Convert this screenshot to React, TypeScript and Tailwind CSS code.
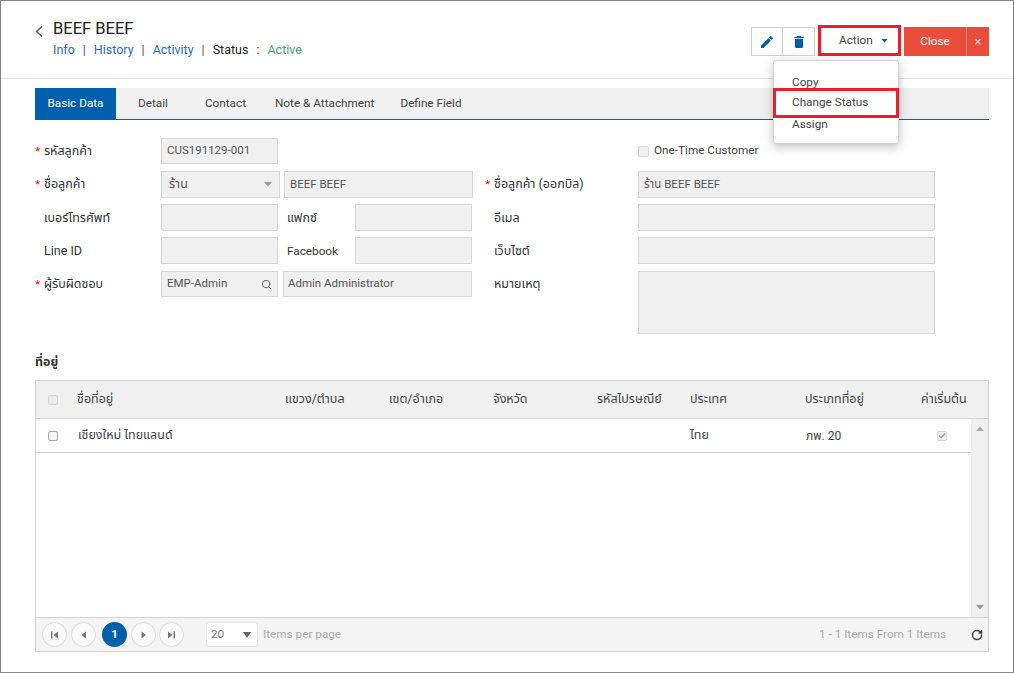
import React from "react";
import { Search, RotateCw, Check } from "lucide-react";

const Box = ({ w, h = "h-[27px]", children, className = "" }: { w: string; h?: string; children?: React.ReactNode; className?: string }) => (
  <div className={`${w} ${h} shrink-0 flex items-center border border-[#d6d6d6] bg-[#f0f0f0] px-[5px] text-[11.5px] text-[#555] ${className}`}>{children}</div>
);

const Label = ({ text, req, w, className = "pt-[2px]" }: { text: string; req?: boolean; w: string; className?: string }) => (
  <div className={`${w} shrink-0 flex items-start h-full text-[#333] ${className}`}>
    <span className="w-[9px] shrink-0 text-[#f00] leading-[22px]">{req ? "*" : ""}</span>
    <span className="leading-[22px] text-[12.5px]">{text}</span>
  </div>
);

const Circle = ({ children, active, className = "" }: { children: React.ReactNode; active?: boolean; className?: string }) => (
  <div className={`w-[25px] h-[25px] rounded-full flex items-center justify-center ${active ? "bg-[#0060ae] text-white font-bold" : "border border-[#dcdcdc] bg-[#fafafa]"} ${className}`}>{children}</div>
);

const Tri = ({ kind }: { kind: "first" | "prev" | "next" | "last" }) => (
  <svg width="9" height="8" viewBox="0 0 9 8" fill="#777">
    {kind === "first" && <><rect x="1" y="0.5" width="1.5" height="7" /><path d="M8 0.5v7L3.5 4z" /></>}
    {kind === "prev" && <path d="M7 0.5v7L2.5 4z" />}
    {kind === "next" && <path d="M2.5 0.5v7L7 4z" />}
    {kind === "last" && <><rect x="6.5" y="0.5" width="1.5" height="7" /><path d="M1 0.5v7L5.5 4z" /></>}
  </svg>
);

const cols = "grid grid-cols-[41px_208px_104px_104px_104px_93px_115px_116px_1fr] items-center";

export default function App() {
  return (
    <div
      className="relative w-[1014px] h-[673px] overflow-hidden border border-[#868686] bg-white text-[11.75px] text-[#333]"
      style={{ fontFamily: 'Roboto, "Noto Sans", "Noto Sans Thai", "DejaVu Sans", sans-serif' }}
    >
      <header className="h-[78px] border-b border-[#e3e3e3] flex justify-between pl-[34px] pr-[24px]">
        <div className="flex pt-[17px]">
          <svg width="18" height="24" viewBox="0 0 18 24" className="mt-[1px] text-[#666]" fill="none" stroke="currentColor" strokeWidth="1.6">
            <path d="M7 7.5 1.5 12.5 7 17.5" />
          </svg>
          <div>
            <div className="text-[16.5px] leading-[22px] text-[#222]">BEEF BEEF</div>
            <div className="flex gap-[8px] mt-[1px] leading-[18px] text-[12.5px] text-[#2a6ebb]">
              <span>Info</span><span className="text-[#555]">|</span>
              <span>History</span><span className="text-[#555]">|</span>
              <span>Activity</span><span className="text-[#a33]">|</span>
              <span className="text-[#222]">Status</span><span className="text-[#222]">:</span>
              <span className="text-[#3aa76d]">Active</span>
            </div>
          </div>
        </div>
        <div className="flex items-start pt-[26px]">
          <div className="w-[32px] h-[29px] border border-[#d0d0d0] flex items-center justify-center">
            <svg width="12" height="12" viewBox="3 3 18 18" fill="#0060ae"><path d="M3 17.25V21h3.75L17.81 9.94l-3.75-3.75L3 17.25zM20.71 7.04a1 1 0 0 0 0-1.41l-2.34-2.34a1 1 0 0 0-1.41 0l-1.83 1.83 3.75 3.75 1.83-1.83z" /></svg>
          </div>
          <div className="w-[32px] h-[29px] border border-l-0 border-[#d0d0d0] flex items-center justify-center">
            <svg width="10" height="12" viewBox="5 3 14 18" fill="#0060ae"><path d="M6 19c0 1.1.9 2 2 2h8c1.1 0 2-.9 2-2V7H6v12zM19 4h-3.5l-1-1h-5l-1 1H5v2h14V4z" /></svg>
          </div>
          <div className="ml-[3px] -mt-[2px] w-[83px] h-[31px] border-[3px] border-[#ed1c2e] flex items-center pl-[18px] text-[#444]">
            <span>Action</span>
            <svg width="7" height="4" viewBox="0 0 8 5" fill="#0060ae" className="ml-[8px]"><path d="M0 0h8L4 4.5z" /></svg>
          </div>
          <div className="ml-[3px] w-[62px] h-[29px] bg-[#eb4d3d] text-white flex items-center justify-center">Close</div>
          <div className="w-[23px] h-[29px] bg-[#eb4d3d] border-l border-[#f08478] text-[#fbd5d0] flex items-center justify-center text-[13px]">×</div>
        </div>
      </header>

      <div className="absolute left-[772px] top-[59px] w-[126px] h-[84px] bg-white border border-[#d2d2d2] rounded-[3px] shadow-[0_3px_10px_rgba(0,0,0,0.25)] pt-[11px] text-[#444] z-10">
        <div className="pl-[18px] leading-[21px]">Copy</div>
        <div className="-mx-px h-[30px] -mt-[5px] -mb-[4px] border-[3px] border-[#ed1c2e] pl-[16px] flex items-center">Change Status</div>
        <div className="pl-[18px] leading-[21px]">Assign</div>
      </div>

      <div className="pl-[34px] pr-[24px] pt-[9px]">
        <nav className="h-[32px] flex bg-[#f0f0f0] border-b border-[#0060ae] text-[#444]">
          <div className="w-[81px] bg-[#0060ae] text-white flex items-center justify-center">Basic Data</div>
          <div className="ml-[22px] flex items-center">Detail</div>
          <div className="ml-[37px] flex items-center">Contact</div>
          <div className="ml-[29px] flex items-center">Note &amp; Attachment</div>
          <div className="ml-[26px] flex items-center">Define Field</div>
        </nav>

        <section className="mt-[18px] flex flex-col">
          <div className="flex h-[26px]">
            <Label w="w-[126px]" text="รหัสลูกค้า" req />
            <Box w="w-[117px]" h="h-[26px]">CUS191129-001</Box>
            <div className="ml-[360px] flex items-center gap-[5px] text-[#444]">
              <div className="w-[11px] h-[11px] rounded-[2px] border border-[#d6d6d6] bg-[#f0f0f0]" />
              <span>One-Time Customer</span>
            </div>
          </div>
          <div className="flex h-[27px] mt-[7px]">
            <Label w="w-[126px]" text="ชื่อลูกค้า" req />
            <Box w="w-[119px]" className="!px-[7px] justify-between">
              <span className="text-[12.5px]">ร้าน</span>
              <svg width="8" height="5" viewBox="0 0 8 5" fill="#999"><path d="M0 0h8L4 4.5z" /></svg>
            </Box>
            <Box w="w-[189px]" className="ml-[4px]">BEEF BEEF</Box>
            <div className="w-[12px] shrink-0" />
            <Label w="w-[153px]" text="ชื่อลูกค้า (ออกบิล)" req />
            <Box w="w-[297px]">ร้าน BEEF BEEF</Box>
          </div>
          <div className="flex h-[27px] mt-[6px]">
            <Label w="w-[126px]" text="เบอร์โทรศัพท์" className="pt-[3px]" />
            <Box w="w-[117px]" />
            <div className="w-[77px] shrink-0 pl-[9px] pt-[3px] leading-[22px] text-[12.5px]">แฟกซ์</div>
            <Box w="w-[117px]" />
            <div className="w-[13px] shrink-0" />
            <Label w="w-[153px]" text="อีเมล" className="pt-[3px]" />
            <Box w="w-[297px]" />
          </div>
          <div className="flex h-[27px] mt-[6px]">
            <Label w="w-[126px]" text="Line ID" className="pt-[3px]" />
            <Box w="w-[117px]" />
            <div className="w-[77px] shrink-0 pl-[9px] pt-[3px] leading-[22px]">Facebook</div>
            <Box w="w-[117px]" />
            <div className="w-[13px] shrink-0" />
            <Label w="w-[153px]" text="เว็บไซต์" className="pt-[3px]" />
            <Box w="w-[297px]" />
          </div>
          <div className="flex mt-[7px] h-[63px]">
            <Label w="w-[126px]" text="ผู้รับผิดชอบ" req />
            <Box w="w-[117px]" h="h-[26px]" className="justify-between">
              <span>EMP-Admin</span>
              <Search size={11} strokeWidth={2} className="text-[#555]" />
            </Box>
            <Box w="w-[189px]" h="h-[26px]" className="ml-[5px] !px-[4px]">Admin Administrator</Box>
            <div className="w-[13px] shrink-0" />
            <Label w="w-[153px]" text="หมายเหตุ" />
            <Box w="w-[297px]" h="h-[63px]" />
          </div>
        </section>

        <h3 className="mt-[17px] h-[29px] font-bold text-[#333] leading-[22px] text-[12.5px]">ที่อยู่</h3>

        <section className="h-[272px] w-[954px] border border-[#d2d2d2] flex flex-col text-[#444]">
          <div className={`${cols} h-[38px] shrink-0 bg-[#f0f0f0] border-b border-[#d2d2d2] text-[12.5px]`}>
            <div className="pl-[12px]"><div className="w-[10px] h-[10px] rounded-[2px] border border-[#d6d6d6] bg-[#ececec]" /></div>
            <div>ชื่อที่อยู่</div>
            <div>แขวง/ตำบล</div>
            <div>เขต/อำเภอ</div>
            <div>จังหวัด</div>
            <div>รหัสไปรษณีย์</div>
            <div>ประเทศ</div>
            <div>ประเภทที่อยู่</div>
            <div className="whitespace-nowrap">ค่าเริ่มต้น</div>
          </div>
          <div className="flex-1 flex min-h-0">
            <div className="flex-1">
              <div className={`${cols} h-[34px] border-b border-[#d2d2d2] text-[12.5px]`}>
                <div className="pl-[12px]"><div className="w-[10px] h-[10px] rounded-[2px] border border-[#aaa] bg-[#f4f4f4]" /></div>
                <div className="pl-[1px]">เชียงใหม่ ไทยแลนด์</div>
                <div /><div /><div /><div />
                <div>ไทย</div>
                <div className="pl-[1px] text-[12px]">ภพ. 20</div>
                <div className="pl-[16px]">
                  <div className="w-[10px] h-[10px] rounded-[2px] border border-[#d6d6d6] bg-[#eee] flex items-center justify-center">
                    <Check size={8} strokeWidth={4} className="text-[#999]" />
                  </div>
                </div>
              </div>
            </div>
            <div className="w-[17px] shrink-0 bg-[#f0f0f0] flex flex-col justify-between items-center py-[7px]">
              <svg width="8" height="5" viewBox="0 0 8 5" fill="#aaa"><path d="M0 5h8L4 .5z" /></svg>
              <svg width="8" height="5" viewBox="0 0 8 5" fill="#999"><path d="M0 0h8L4 4.5z" /></svg>
            </div>
          </div>
          <div className="h-[34px] shrink-0 bg-[#f4f4f4] border-t border-[#d2d2d2] flex items-center pl-[6px] pr-[5px] text-[#aaa]">
            <div className="flex items-center">
              <Circle><Tri kind="first" /></Circle>
              <Circle className="ml-[4px]"><Tri kind="prev" /></Circle>
              <Circle active className="ml-[6px]">1</Circle>
              <Circle className="ml-[4px]"><Tri kind="next" /></Circle>
              <Circle className="ml-[3px]"><Tri kind="last" /></Circle>
            </div>
            <div className="ml-[22px] w-[52px] h-[25px] bg-white border border-[#e4e4e4] rounded-[3px] flex items-center justify-between px-[4px] text-[#777]">
              <span>20</span>
              <svg width="8" height="6" viewBox="0 0 8 6" fill="#666" className="mr-[2px]"><path d="M0 0h8L4 6z" /></svg>
            </div>
            <span className="ml-[5px]">Items per page</span>
            <span className="ml-auto">1 - 1 Items From 1 Items</span>
            <RotateCw size={12} strokeWidth={3} className="ml-[25px] text-[#444]" />
          </div>
        </section>
      </div>
    </div>
  );
}
